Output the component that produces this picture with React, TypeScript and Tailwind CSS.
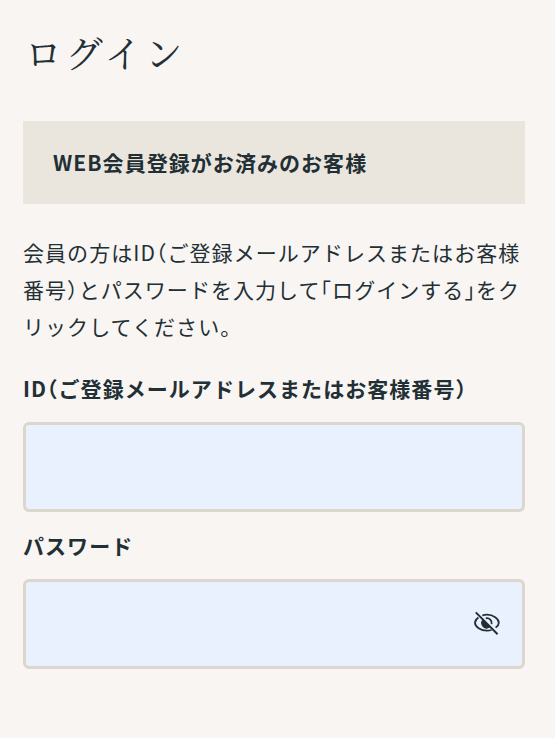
import { useState } from "react";

const inputClass =
  "mt-4 block h-[90px] w-full rounded-md border-3 border-[#dcd7cd] bg-[#e9f1ff] px-5 text-[#222f35] outline-none focus:border-[#a39c8b]";

const labelClass = "block leading-9 font-bold [font-feature-settings:'halt']";

const EyeIcon = ({ off }: { off: boolean }) => (
  <svg width="28" height="28" viewBox="0 0 28 28" fill="none" stroke="currentColor" strokeWidth="1.8" aria-hidden="true">
    {off ? (
      <>
        <path d="M9.3 5.5C10.8 5 12.4 4.7 14 4.7c6.200 0 11.800 4.100 11.800 8 0 1.700-1.200 3.400-3.200 4.900" />
        <path d="M5.4 7.4C3.3 8.9 2 10.8 2 12.700c0 3.900 5.600 8 12 8 1.600 0 3.200-.2 4.600-.7" />
        <path d="M12.8 8.300a4.800 4.800 0 0 1 5.800 5.800" />
        <path d="M10.200 10.200a4.500 4.500 0 0 0 6 6.600z" fill="currentColor" />
        <path d="M2.800 2.400l21.800 21.800" strokeWidth="2" />
      </>
    ) : (
      <>
        <path d="M2 12.700c0-3.900 5.600-8 12-8s11.800 4.100 11.800 8-5.400 8-11.800 8-12-4.100-12-8z" />
        <circle cx="14" cy="12.700" r="4.500" />
      </>
    )}
  </svg>
);

const App = () => {
  const [visible, setVisible] = useState(false);

  return (
    <main className="min-h-screen bg-[#f8f5f2] pt-8 pr-[30px] pb-16 pl-[23px] font-['Noto_Sans_CJK_JP',sans-serif] text-[21px] tracking-wider text-[#222f35]">
      <h1 className="pt-0.5 pl-0.5 font-['Liberation_Serif','Noto_Serif_CJK_JP',serif] text-[37px] leading-11 tracking-widest">
        ログイン
      </h1>

      {/* Section heading */}
      <h2 className="mt-[43px] bg-[#eae6de] px-[30px] py-6 leading-[35px] font-bold">
        WEB会員登録がお済みのお客様
      </h2>

      <p className="mt-[30px] leading-[37px] [font-feature-settings:'halt']">
        会員の方はID（ご登録メールアドレスまたはお客様番号）とパスワードを入力して「ログインする」をクリックしてください。
      </p>

      {/* Login form */}
      <form className="mt-[25px] space-y-[15px]" onSubmit={(e) => e.preventDefault()}>
        <div>
          <label htmlFor="login-id" className={labelClass}>
            ID（ご登録メールアドレスまたはお客様番号）
          </label>
          <input id="login-id" type="text" className={inputClass} />
        </div>

        <div>
          <label htmlFor="password" className={labelClass}>
            パスワード
          </label>
          <div className="relative">
            <input id="password" type={visible ? "text" : "password"} className={`${inputClass} pr-16`} />
            <button
              type="button"
              aria-label="パスワードを表示"
              onClick={() => setVisible(!visible)}
              className="absolute inset-y-0 right-6 flex items-center"
            >
              <EyeIcon off={!visible} />
            </button>
          </div>
        </div>
      </form>
    </main>
  );
};

export default App;
